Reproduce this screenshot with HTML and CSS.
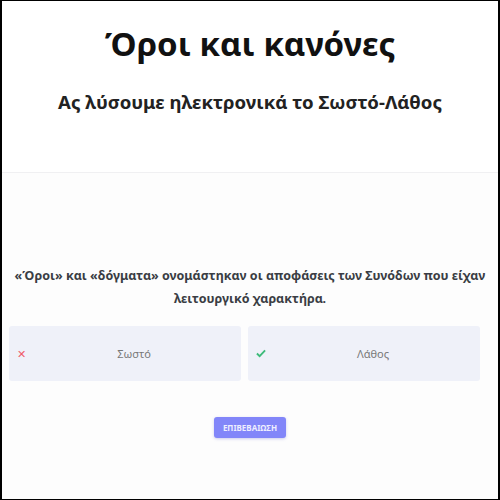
FILE: index.html
```html
<!DOCTYPE html>
<html lang="el">
<head>
  <meta charset="UTF-8">
  <title>Όροι και κανόνες</title>
  <link rel="stylesheet" href="styles.css">
</head>
<body>
<div class="frame">
  <!-- Header -->
  <div class="header">
    <h1>Όροι και κανόνες</h1>
    <h2>Ας λύσουμε ηλεκτρονικά το Σωστό-Λάθος</h2>
  </div>

  <!-- Question -->
  <div class="quiz">
    <p class="question">«Όροι» και «δόγματα» ονομάστηκαν οι αποφάσεις των Συνόδων που είχαν λειτουργικό χαρακτήρα.</p>

    <div class="options">
      <div class="option">
        <span class="icon wrong">&#10005;</span>
        <span class="label">Σωστό</span>
      </div>
      <div class="option">
        <span class="icon right">
          <svg width="11" height="9" viewBox="0 0 11 9"><path d="M1 4.5 L4 7.5 L10 1" fill="none" stroke="#3dbb7a" stroke-width="2"/></svg>
        </span>
        <span class="label">Λάθος</span>
      </div>
    </div>

    <div class="actions">
      <button class="button">ΕΠΙΒΕΒΑΙΩΣΗ</button>
    </div>
  </div>
</div>
</body>
</html>
```

FILE: styles.css
```css
/* Basic styling */
body {
  margin: 0;
  font-family: "Noto Sans", "Open Sans", sans-serif;
  background: #fff;
}
.frame {
  width: 500px;
  height: 500px;
  box-sizing: border-box;
  border: 2px solid #000;
  border-top-width: 1px;
  border-bottom-width: 1px;
  background: #fdfdfd;
  overflow: hidden;
}
.header {
  height: 172px;
  box-sizing: border-box;
  background: #fff;
  border-bottom: 1px solid #f0f0f2;
  text-align: center;
  padding-top: 18px;
}
h1 {
  margin: 0;
  font-size: 33px;
  font-weight: 700;
  color: #111;
  line-height: 50px;
}
h2 {
  margin: 20px 0 0;
  font-size: 18.6px;
  font-weight: 700;
  color: #222;
  line-height: 26px;
}
.quiz {
  padding-top: 91px;
}
.question {
  margin: 0 12px;
  font-size: 12.5px;
  font-weight: 700;
  color: #3a3d44;
  text-align: center;
  line-height: 23px;
}
.options {
  display: flex;
  gap: 7px;
  margin: 16px 18px 0 7px;
}
.option {
  flex: 1;
  height: 55px;
  display: flex;
  align-items: center;
  background: #eff1f9;
  border-radius: 3px;
  padding-left: 8px;
}
.icon {
  width: 10px;
  font-size: 11px;
  line-height: 1;
  display: flex;
  align-items: center;
}
.wrong {
  color: #ef5b6a;
}
.label {
  flex: 1;
  text-align: center;
  font-size: 11px;
  color: #777;
}
.actions {
  text-align: center;
  margin-top: 33px;
}
.button {
  background: #8286f9;
  color: #eef;
  border: none;
  border-radius: 3px;
  padding: 0 9px;
  height: 21px;
  font-family: "Noto Sans", sans-serif;
  font-size: 8px;
  font-weight: 700;
  box-shadow: 0 1px 3px rgba(90,90,200,0.3);
  cursor: pointer;
}
```
